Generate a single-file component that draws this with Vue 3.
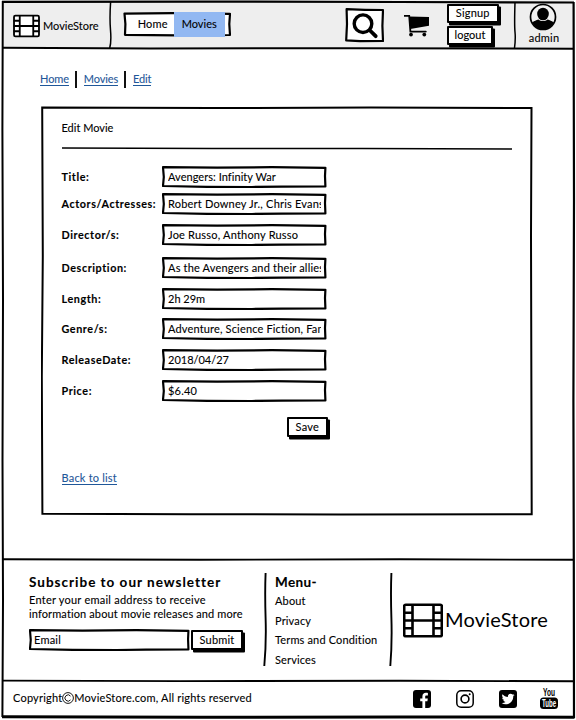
<script setup>
const navItems = [
  { label: 'Home', active: false },
  { label: 'Movies', active: true },
]

const fields = [
  { key: 'title', label: 'Title:', value: 'Avengers: Infinity War' },
  { key: 'actors', label: 'Actors/Actresses:', value: 'Robert Downey Jr., Chris Evans' },
  { key: 'director', label: 'Director/s:', value: 'Joe Russo, Anthony Russo' },
  { key: 'description', label: 'Description:', value: 'As the Avengers and their allies' },
  { key: 'length', label: 'Length:', value: '2h 29m' },
  { key: 'genre', label: 'Genre/s:', value: 'Adventure, Science Fiction, Fantasy' },
  { key: 'release', label: 'ReleaseDate:', value: '2018/04/27' },
  { key: 'price', label: 'Price:', value: '$6.40' },
]

const menu = ['About', 'Privacy', 'Terms and Condition', 'Services']

// Hand-drawn outline shared by the inputs, stretched over each box
const wobble = 'M1 1.2 L55 1.6 L110 1.2 L163.4 1.8 L163 10 L163.4 20.4 L120 20.6 L90 21 L45 20.8 L1 20 L1.8 11 Z'
</script>

<template>
  <div class="page">
    <header class="header">
      <div class="brand">
        <svg class="film-small" viewBox="0 0 40 34">
          <rect x="1.5" y="1.5" width="37" height="31" rx="2" />
          <path d="M10 1v32M30 1v32M1 17h38M1 9.2h9M1 24.8h9M30 9.2h9M30 24.8h9" />
        </svg>
        <span class="brand-name">MovieStore</span>
      </div>
      <nav class="nav">
        <svg class="outline" viewBox="0 0 108 25" preserveAspectRatio="none">
          <path class="box" d="M1.5 1.6 L50 1.2 L107 1.8 L106.3 12 L107 23 L55 23.4 L2 22.8 L2.4 12 Z" />
        </svg>
        <a v-for="item in navItems" :key="item.label" class="nav-item" :class="{ active: item.active }">
          <span>{{ item.label }}</span>
        </a>
      </nav>
      <div class="search">
        <svg viewBox="0 0 39 35">
          <path class="box" d="M1.6 1.2 L20 1.8 L38 2 L37.4 18 L38 33 L15 33.2 L1.2 32.4 L2 16 Z" />
          <circle cx="18" cy="15.7" r="8.8" fill="none" stroke="#000" stroke-width="3.4" />
          <path d="M25 22.500l5.700 5.700" stroke="#000" stroke-width="3.800" stroke-linecap="round" />
        </svg>
      </div>
      <svg class="cart" viewBox="0 0 26 22">
        <path d="M.5 .9h4.700l1.200 15.700h15.400" fill="none" stroke="#000" stroke-width="1.800" stroke-linecap="round" />
        <path d="M5.200 1.600L25 2v8.800L6.300 14z" />
        <circle cx="7" cy="19.600" r="1.900" />
        <circle cx="20.300" cy="19.600" r="1.900" />
      </svg>
      <div class="auth">
        <button class="btn signup">Signup</button>
        <button class="btn logout">logout</button>
      </div>
      <div class="user">
        <svg viewBox="0 0 28 28">
          <defs>
            <clipPath id="avatar"><circle cx="14" cy="14" r="12.2" /></clipPath>
          </defs>
          <circle cx="14" cy="14" r="12.5" fill="#f2f2f2" stroke="#000" stroke-width="1.7" />
          <ellipse cx="14" cy="11" rx="5.8" ry="6.300" />
          <path clip-path="url(#avatar)" d="M2 28V22c0-2.500 2.600-4 7.500-5.500 2.400 2 6.600 2 9 0C23.400 18 26 19.500 26 22v6z" />
        </svg>
        <span>admin</span>
      </div>
    </header>

    <main class="main">
      <div class="crumbs">
        <a class="link">Home</a>
        <i class="bar"></i>
        <a class="link">Movies</a>
        <i class="bar"></i>
        <a class="link">Edit</a>
      </div>

      <section class="card">
        <svg class="outline" viewBox="0 0 492 410" preserveAspectRatio="none">
          <path d="M1.200 1.500 L170 2 L330 1.600 L490.500 2 L490 130 L490.700 408.300 L300 408.600 L150 408.200 L1.400 407.800 L.8 270 L1.800 150 Z" fill="none" stroke="#000" stroke-width="2" />
        </svg>
        <h1>Edit Movie</h1>
        <svg class="rule" viewBox="0 0 450 3" preserveAspectRatio="none">
          <path d="M0 1 L150 1.600 L300 1.400 L450 2" fill="none" stroke="#000" stroke-width="1.500" />
        </svg>
        <form class="form">
          <template v-for="f in fields" :key="f.key">
            <label>{{ f.label }}</label>
            <div class="input">
              <svg class="outline" viewBox="0 0 165 22" preserveAspectRatio="none">
                <path class="box" :d="wobble" />
              </svg>
              <span class="value" :class="f.key">{{ f.value }}</span>
            </div>
          </template>
        </form>
        <button class="btn save">Save</button>
        <div class="back"><a class="link">Back to list</a></div>
      </section>
    </main>

    <footer class="footer">
      <div class="news">
        <h2>Subscribe to our newsletter</h2>
        <p><span class="l1">Enter your email address to receive</span><br /><span class="l2">information about movie releases and more</span></p>
        <div class="subscribe">
          <div class="input email">
            <svg class="outline" viewBox="0 0 165 22" preserveAspectRatio="none">
              <path class="box" :d="wobble" />
            </svg>
            <span class="value">Email</span>
          </div>
          <button class="btn submit">Submit</button>
        </div>
      </div>
      <svg class="divider" viewBox="0 0 4 94"><path d="M2.600 0Q1.800 20 2.600 45T1.300 93" /></svg>
      <div class="menu">
        <h2>Menu-</h2>
        <a v-for="m in menu" :key="m">{{ m }}</a>
      </div>
      <svg class="divider" viewBox="0 0 4 94"><path d="M2.400 0Q1.600 20 2.400 45T1.300 93" /></svg>
      <div class="big-brand">
        <svg class="film-big" viewBox="0 0 40 34">
          <rect x="1.200" y="1.200" width="37.600" height="31.600" rx="1.500" />
          <path d="M9.500 1v32M30.500 1v32M1 17h38M1 9.200h9M1 24.800h9M30 9.200h9M30 24.800h9" />
        </svg>
        <span>MovieStore</span>
      </div>
    </footer>

    <div class="legal">
      <span class="copy">Copyright<svg class="copy-mark" viewBox="0 0 12 12"><circle cx="6" cy="6" r="5.400" /><path d="M8.500 4.100A3.100 3.100 0 1 0 8.500 7.900" /></svg>MovieStore.com, All rights reserved</span>
      <div class="social">
        <svg viewBox="0 0 18 18">
          <rect width="18" height="18" rx="3" />
          <path fill="#fff" d="M9.400 18v-6.700H7.200V8.500h2.200V6.400c0-2.300 1.400-3.600 3.500-3.600.9 0 1.700.1 2 .1v2.500h-1.300c-1.100 0-1.400.5-1.400 1.300v1.800h2.600l-.4 2.800h-2.200V18z" />
        </svg>
        <svg viewBox="0 0 18 18" fill="none" stroke="#000">
          <rect x=".8" y=".8" width="16.400" height="16.400" rx="4.300" stroke-width="1.500" />
          <circle cx="9" cy="9" r="3.900" stroke-width="1.600" />
          <circle cx="13.700" cy="4.200" r="1" fill="#000" stroke="none" />
        </svg>
        <svg viewBox="0 0 18 18">
          <rect width="18" height="18" rx="3" />
          <path fill="#fff" transform="translate(2.600 2.500) scale(.54)" d="M23.953 4.570a10 10 0 01-2.825.775 4.958 4.958 0 002.163-2.723c-.951.555-2.005.959-3.127 1.184a4.920 4.920 0 00-8.384 4.482C7.690 8.095 4.067 6.130 1.640 3.162a4.822 4.822 0 00-.666 2.475c0 1.710.870 3.213 2.188 4.096a4.904 4.904 0 01-2.228-.616v.060a4.923 4.923 0 003.946 4.827 4.996 4.996 0 01-2.212.085 4.936 4.936 0 004.604 3.417 9.867 9.867 0 01-6.102 2.105c-.390 0-.779-.023-1.170-.067a13.995 13.995 0 007.557 2.209c9.053 0 13.998-7.496 13.998-13.985 0-.210 0-.420-.015-.630A9.935 9.935 0 0024 4.590z" />
        </svg>
        <svg class="youtube" viewBox="0 0 18 22">
          <text x="3" y="8.300" textLength="12" lengthAdjust="spacingAndGlyphs">You</text>
          <rect y="9.500" width="18" height="11.500" rx="3.500" />
          <text x="2" y="18.800" textLength="14" lengthAdjust="spacingAndGlyphs" class="tube">Tube</text>
        </svg>
      </div>
    </div>

    <svg class="frame" viewBox="0 0 576 720">
      <path stroke-width="2.200" d="M2 1.800 L200 1.600 L400 2 L574 2.500" />
      <path stroke-width="2" d="M2.800 1 L2.400 130 L3 300 L2.500 460 L3 600 L2.400 717" />
      <path stroke-width="2.200" d="M573.600 2 L574 200 L573.400 400 L573.800 560 L574 718" />
      <path stroke-width="3" d="M2 716.800 L200 717.300 L400 716.900 L574.500 717.200" />
      <path stroke-width="2" d="M2 47.800 L150 48.500 L350 48.200 L574 48.700" />
      <path stroke-width="1.500" d="M110.600 2 Q109.500 18 110.500 30 T109.700 48M515 2 Q514.300 25 515 32 T514.500 48" />
      <path stroke-width="1.900" d="M2 559.200 L200 559.700 L400 559.300 L574 559.800" />
      <path stroke-width="1.900" d="M2 680.600 L180 681.100 L400 680.700 L574 681.300" />
    </svg>
  </div>
</template>

<style>
body {
  margin: 0;
  background: #fff;
}
</style>

<style scoped>
* {
  box-sizing: border-box;
}
.page {
  position: relative;
  width: 576px;
  height: 720px;
  overflow: hidden;
  display: flex;
  flex-direction: column;
  background: #fff;
  color: #000;
  font: 11px/14px Lato, "Open Sans", sans-serif;
  letter-spacing: 0.2px;
  -webkit-text-stroke: 0.1px currentColor;
}
h1,
h2,
p {
  margin: 0;
}
svg {
  display: block;
  flex: none;
}
.frame {
  position: absolute;
  inset: 0;
  width: 576px;
  height: 720px;
  fill: none;
  stroke: #000;
  pointer-events: none;
}
.outline {
  position: absolute;
  inset: 0;
  width: 100%;
  height: 100%;
}
.box {
  fill: #fff;
  stroke: #000;
  stroke-width: 2.2;
  stroke-linejoin: round;
}
.header {
  height: 48px;
  flex: none;
  display: flex;
  align-items: flex-start;
  margin: 0 2px;
  background: #eee;
}
.brand {
  width: 121px;
  height: 48px;
  padding: 4px 0 0 11px;
  display: flex;
  align-items: center;
  gap: 3px;
}
.brand-name {
  letter-spacing: 0;
}
.film-small,
.film-big {
  fill: #fff;
  stroke: #000;
}
.film-small {
  width: 27px;
  height: 24px;
  stroke-width: 2.7;
}
.nav {
  position: relative;
  width: 108px;
  height: 25px;
  margin-top: 12px;
  padding-left: 8.5px;
  display: flex;
}
.nav-item {
  position: relative;
  width: 42.5px;
  line-height: 24px;
  text-align: center;
}
.nav-item.active {
  width: 50.5px;
  letter-spacing: 0;
  background: #92b8f2;
}
.search {
  width: 39px;
  height: 35px;
  margin: 8px 0 0 114px;
}
.cart {
  width: 26px;
  height: 22px;
  margin: 15px 0 0 20px;
}
.auth {
  width: 68px;
  margin: 4px 0 0 17px;
  display: flex;
  flex-direction: column;
  align-items: flex-start;
  gap: 3.5px;
}
.btn {
  display: block;
  padding: 0;
  font: inherit;
  line-height: 14px;
  color: inherit;
  letter-spacing: inherit;
  background: #fff;
  border: 2px solid #000;
  border-radius: 1px;
  box-shadow: 2px 2.5px 0 #000;
}
.signup {
  width: 51.5px;
  height: 18.5px;
}
.logout {
  width: 46px;
  height: 18.5px;
  letter-spacing: 0;
}
.user {
  width: 58px;
  padding-top: 3px;
  display: flex;
  flex-direction: column;
  align-items: center;
}
.user svg {
  width: 28px;
  height: 28px;
  margin-left: -3px;
}
.main {
  height: 511px;
  flex: none;
  padding: 23px 42px 0 40px;
}
.crumbs {
  display: flex;
  align-items: center;
  height: 17px;
}
.crumbs .link {
  letter-spacing: -0.1px;
}
.link {
  color: #1f5799;
  border-bottom: 1px solid #1f5799;
  line-height: 12px;
}
.bar {
  width: 2px;
  height: 17px;
  margin: 0 6.5px 0 6.3px;
  background: #111;
}
.card {
  position: relative;
  width: 492px;
  height: 410px;
  margin: 18px 0 0 1px;
  padding: 15px 20px 0 20.5px;
}
h1 {
  font: inherit;
  letter-spacing: 0;
}
.rule {
  width: 450px;
  height: 3px;
  margin-top: 12px;
}
.form {
  margin-top: 16px;
  display: grid;
  grid-template-columns: 100.5px 165px;
  grid-template-rows: 27px 31px 33px 31px 29.5px 31px 31.5px 22px;
}
label {
  font-weight: 700;
  font-size: 10.8px;
  line-height: 21px;
  letter-spacing: 0.58px;
  white-space: nowrap;
}
.input {
  position: relative;
  width: 165px;
  height: 22px;
  padding: 0 6px;
}
.value {
  position: relative;
  display: block;
  line-height: 21px;
  white-space: nowrap;
  overflow: hidden;
}
.title {
  letter-spacing: 0.05px;
}
.actors {
  letter-spacing: 0.2px;
}
.description {
  letter-spacing: 0.18px;
}
.genre {
  letter-spacing: 0.16px;
}
.length,
.release {
  letter-spacing: 0;
}
.save {
  width: 41.5px;
  height: 20px;
  margin: 14.5px 0 0 225px;
}
.back {
  margin-top: 34px;
}
.footer {
  height: 122px;
  flex: none;
  display: flex;
  padding: 14px 0 0 29px;
}
h2 {
  font-size: 13.5px;
  line-height: 18px;
  font-weight: 700;
  letter-spacing: 1px;
  white-space: nowrap;
}
.news {
  width: 234px;
}
.news p {
  margin-top: 2px;
  line-height: 13.5px;
  white-space: nowrap;
}
.l1 {
  letter-spacing: 0.24px;
}
.l2 {
  letter-spacing: 0.12px;
}
.subscribe {
  margin-top: 9px;
  display: flex;
  gap: 1px;
}
.email {
  width: 161px;
  padding-left: 5px;
}
.submit {
  width: 52px;
  height: 20.5px;
  margin-top: 0.5px;
}
.divider {
  width: 4px;
  height: 94px;
  fill: none;
  stroke: #000;
  stroke-width: 1.9;
}
.menu {
  width: 122px;
  padding-left: 8px;
  display: flex;
  flex-direction: column;
}
.menu h2 {
  letter-spacing: 0.4px;
}
.menu a {
  height: 19.7px;
  line-height: 20px;
  letter-spacing: 0.15px;
  white-space: nowrap;
}
.big-brand {
  margin: 30px 0 0 10px;
  display: flex;
  gap: 2px;
  height: 35px;
  align-items: center;
  font-size: 20px;
  -webkit-text-stroke: 0;
}
.big-brand span {
  padding-bottom: 3px;
}
.film-big {
  width: 40px;
  height: 35px;
  stroke-width: 2.6;
}
.legal {
  flex: none;
  height: 36px;
  padding: 9px 18px 0 13px;
  display: flex;
  justify-content: space-between;
}
.copy {
  display: flex;
  align-items: center;
  height: 15px;
  white-space: nowrap;
}
.copy-mark {
  width: 12px;
  height: 12px;
  fill: none;
  stroke: #000;
  stroke-width: 0.9;
}
.social {
  display: flex;
  gap: 25px;
}
.social svg {
  width: 18px;
  height: 18px;
}
.social .youtube {
  height: 22px;
  margin: -2px 0 0 -2px;
  font: 700 10px "Liberation Sans", sans-serif;
  letter-spacing: 0;
  -webkit-text-stroke: 0;
}
.tube {
  fill: #fff;
}
</style>
